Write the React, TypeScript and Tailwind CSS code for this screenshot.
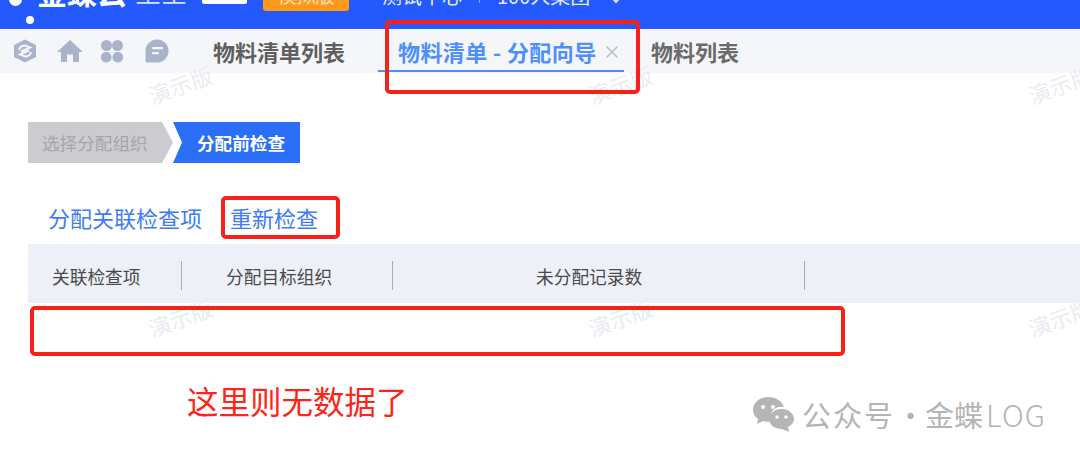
const cjk = "font-['Noto_Sans_CJK_SC','Noto_Sans',sans-serif]";

function Watermark({ className }: { className: string }) {
  return (
    <span className={`absolute -rotate-[20deg] text-[22px] leading-none whitespace-nowrap text-[#eaecf1] ${className}`}>
      演示版
    </span>
  );
}

function Header() {
  return (
    <header className="relative h-[29px] shrink-0 overflow-hidden bg-[#2459fe] flex items-start">
      <span className="absolute left-[9px] top-[-7px] w-[13px] h-[13px] rounded-full bg-white" />
      <span className="absolute left-[26px] top-[16px] w-[8px] h-[8px] rounded-full bg-white" />
      <div className="ml-[37px] mt-[-24px] flex items-center h-[30px]">
        <span className="w-[98px] text-[30px] font-bold leading-[30px] text-white whitespace-nowrap">金蝶云</span>
        <span className="w-[52px] text-[26px] leading-[30px] text-[#d7e2ff] whitespace-nowrap">星空</span>
      </div>
      <div className="ml-[15px] mt-[-12px] w-[45px] h-[16px] rounded-[2px] bg-white" />
      <div className="ml-[16px] mt-[-12px] w-[86px] h-[23px] rounded-[3px] bg-[#ff9a1c] text-center text-[19px] leading-[14px] text-[#ffe0b0] whitespace-nowrap">
        模拟版
      </div>
      <div className="ml-[33px] mt-[-14px] flex items-center h-[20px] text-[20px] leading-[20px] text-[#e6edff] whitespace-nowrap">
        <span>测试中心</span>
        <span className="mx-[17px] w-px h-[14px] bg-[#8fabff]" />
        <span>100人集团</span>
        <svg className="ml-[20px] mt-[10px]" width="12" height="12" viewBox="0 0 12 12">
          <path d="M2 4 L6 8.5 L10 4 Z" fill="#dbe5ff" />
        </svg>
      </div>
    </header>
  );
}

function TabIcons() {
  return (
    <div className="flex items-center ml-[12px]">
      <svg width="26" height="26" viewBox="0 0 26 26">
        <path d="M13 1.5 L24 7 V19 L13 24.5 L2 19 V7 Z" fill="#a9b4cb" />
        <path d="M7 12 Q8 7.5 13 7.5 L18 9.5 L9 13.5 M19 14 Q18 18.5 13 18.5 L8 16.5 L17 12.5" fill="none" stroke="#f5f6fa" strokeWidth="2" />
      </svg>
      <svg className="ml-[19px]" width="26" height="24" viewBox="0 0 26 24">
        <path d="M13 1 L26 13 H22 V23 H16 V15.5 H10 V23 H4 V13 H0 Z" fill="#a9b4cb" />
      </svg>
      <svg className="ml-[17px]" width="24" height="24" viewBox="0 0 24 24">
        <circle cx="6.5" cy="6.5" r="5.5" fill="#a9b4cb" />
        <circle cx="17.5" cy="6.5" r="5.5" fill="#a9b4cb" />
        <rect x="1" y="13" width="10.5" height="10.5" rx="5" fill="#a9b4cb" />
        <rect x="12.5" y="13" width="10.5" height="10.5" rx="5" fill="#a9b4cb" />
      </svg>
      <svg className="ml-[21px]" width="24" height="24" viewBox="0 0 24 24">
        <path d="M12 0.5 A11.5 11.5 0 1 1 12 23.5 H2 Q0.5 23.5 0.5 22 V12 A11.5 11.5 0 0 1 12 0.5 Z" fill="#a9b4cb" />
        <rect x="7" y="8" width="11" height="2.2" rx="1" fill="#f5f6fa" />
        <rect x="7" y="13" width="7" height="2.2" rx="1" fill="#f5f6fa" />
      </svg>
    </div>
  );
}

function TabBar() {
  return (
    <nav className="h-[44px] shrink-0 bg-[#f5f6fa] flex items-center">
      <TabIcons />
      <span className="ml-[44px] text-[22px] font-bold leading-none text-[#5f5f5f] whitespace-nowrap">物料清单列表</span>
      <div className="relative ml-[33px] h-full w-[246px] flex items-center">
        <span className="ml-[20px] text-[22px] font-bold leading-none tracking-[0.4px] text-[#4d8ffb] whitespace-nowrap">物料清单 - 分配向导</span>
        <svg className="ml-[8px] mt-[2px]" width="14" height="14" viewBox="0 0 14 14">
          <path d="M1.5 1.5 L12.5 12.5 M12.5 1.5 L1.5 12.5" stroke="#b9bdc6" strokeWidth="1.6" />
        </svg>
        <span className="absolute left-0 right-0 top-[41px] h-[2px] bg-[#4d8ffb]" />
      </div>
      <span className="ml-[27px] text-[22px] font-bold leading-none text-[#6a6a6a] whitespace-nowrap">物料列表</span>
    </nav>
  );
}

function Steps() {
  return (
    <div className="ml-[28px] mt-[49px] flex h-[41px]">
      <div className="w-[145px] h-full bg-[#cccbd0] [clip-path:polygon(0_0,134px_0,100%_50%,134px_100%,0_100%)] pl-[14px] text-[17.6px] leading-[41px] text-[#a6a6aa] whitespace-nowrap">
        选择分配组织
      </div>
      <div className="w-[127px] h-full bg-[#2a6ff6] [clip-path:polygon(0_0,100%_0,100%_100%,0_100%,9px_50%)] pl-[24px] text-[17.6px] font-bold leading-[41px] text-white whitespace-nowrap">
        分配前检查
      </div>
    </div>
  );
}

function CheckHeader() {
  const cols = [
    { label: "关联检查项", cell: "w-[154px] pl-[24px]" },
    { label: "分配目标组织", cell: "w-[211px] pl-[44px]" },
    { label: "未分配记录数", cell: "w-[412px] pl-[143px]" },
  ];
  return (
    <div className="ml-[28px] mt-[12px] h-[59px] bg-[#edf0f7] flex items-center">
      {cols.map((c) => (
        <div key={c.label} className={`${c.cell} mt-[4px] h-[29px] border-r border-[#a9acb3] text-[17.7px] leading-[31px] text-[#4a4a4a] whitespace-nowrap`}>
          {c.label}
        </div>
      ))}
    </div>
  );
}

export default function App() {
  return (
    <div className={`relative w-[1080px] h-[458px] overflow-hidden bg-white flex flex-col ${cjk}`}>
      <Header />
      <TabBar />
      <Steps />
      <div className="ml-[48px] mt-[39px] flex text-[22px] leading-[30px] text-[#3f7bf3] whitespace-nowrap">
        <span>分配关联检查项</span>
        <span className="ml-[28px]">重新检查</span>
      </div>
      <CheckHeader />

      <Watermark className="left-[147px] top-[73px]" />
      <Watermark className="left-[587px] top-[73px]" />
      <Watermark className="left-[1027px] top-[73px]" />
      <Watermark className="left-[147px] top-[306px]" />
      <Watermark className="left-[587px] top-[306px]" />
      <Watermark className="left-[1027px] top-[306px]" />

      {/* red annotations drawn over the screenshot */}
      <div className="absolute left-[385px] top-[20px] w-[255px] h-[74px] rounded-[5px] border-[4px] border-[#f7211a]" />
      <div className="absolute left-[221px] top-[196px] w-[119px] h-[43px] rounded-[5px] border-[4px] border-[#f7211a]" />
      <div className="absolute left-[30px] top-[306px] w-[815px] h-[50px] rounded-[5px] border-[4px] border-[#f7211a]" />
      <span className="absolute left-[187px] top-[378px] text-[31.5px] leading-[44px] text-[#ff2318] whitespace-nowrap">这里则无数据了</span>

      {/* wechat footer mark */}
      <div className="absolute left-[752px] top-[396px] flex items-center text-[#b5b5b5]">
        <svg width="43" height="36" viewBox="0 0 43 36">
          <path d="M16 1 C7 1 1 7 1 14 C1 18 3 21 6 23 L5 28 L11 25 C14 26 17 26 19 25 C16 16 24 9 32 11 C30 5 24 1 16 1 Z" fill="#b5b5b5" />
          <circle cx="11" cy="11" r="2" fill="#fff" />
          <circle cx="21" cy="11" r="2" fill="#fff" />
          <path d="M30 13 C22 13 17 18 17 23 C17 29 23 33 30 33 L37 36 L36 31 C40 29 42 26 42 23 C42 18 37 13 30 13 Z" fill="#b5b5b5" />
          <circle cx="25" cy="21" r="1.7" fill="#fff" />
          <circle cx="34" cy="21" r="1.7" fill="#fff" />
        </svg>
        <span className="ml-[7px] w-[123px] text-[29px] leading-[36px] tracking-[2px] whitespace-nowrap">公众号</span>
        <span className="w-[0px] text-[29px] leading-[36px] -translate-x-[29px]">·</span>
        <span className="text-[29px] leading-[36px] whitespace-nowrap">金蝶</span>
        <span className="ml-[3px] text-[30px] leading-[36px] tracking-[1px] font-light whitespace-nowrap">LOG</span>
      </div>
    </div>
  );
}
